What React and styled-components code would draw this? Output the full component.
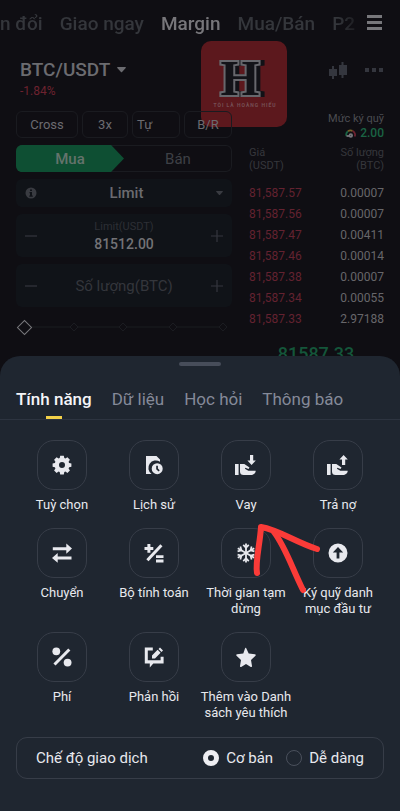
import React, { useState } from 'react'
import styled, { createGlobalStyle } from 'styled-components'

const GlobalStyle = createGlobalStyle`
  * {
    box-sizing: border-box;
  }

  body {
    margin: 0;
    min-height: 100vh;
    background-color: #0f0e13;
    color: #6b6b70;
    font-family: Roboto, "Noto Sans", sans-serif;
    font-size: 13px;
  }

  button, input, select {
    margin: 0;
    padding: 0;
    border: none;
    background: none;
    color: inherit;
    font-family: inherit;
    font-size: inherit;
  }

  button {
    cursor: pointer;
  }
`

const Page = styled.div`
  position: relative;
  min-height: 100vh;
  overflow: hidden;
`

const TopBar = styled.header`
  display: flex;
  align-items: center;
  justify-content: space-between;
  height: 48px;
  padding-right: 18px;
`

const TopNav = styled.nav`
  display: flex;
  gap: 17px;
  flex: 1;
  overflow: hidden;
  white-space: nowrap;
  mask-image: linear-gradient(to right, #000 92%, transparent);
`

const TopLink = styled.a`
  font-size: 19px;
  font-weight: 500;
  line-height: 28px;
  text-decoration: none;
  color: ${props => props.$active ? '#77767a' : '#34363b'};
`

const IconButton = styled.button`
  display: flex;
  align-items: center;
  justify-content: center;
  color: ${props => props.$light ? '#77777b' : '#34363e'};
`

const Badge = styled.div`
  position: absolute;
  top: 41px;
  left: 201px;
  width: 86px;
  height: 86px;
  border-radius: 10px;
  background-color: #5c181d;
`

const Monogram = styled.text`
  font-family: "Liberation Serif", serif;
  font-size: 50px;
  font-weight: 700;
  fill: #131318;
  stroke: #67676c;
  stroke-width: 4px;
  stroke-linejoin: miter;
  paint-order: stroke;
  filter: drop-shadow(4px 0 0 #111116);
`

const PairBar = styled.section`
  position: relative;
  display: flex;
  align-items: flex-start;
  justify-content: space-between;
  height: 63px;
  padding: 10px 17px 0 20px;
`

const Pair = styled.button`
  display: flex;
  align-items: center;
  gap: 7px;
  font-size: 19px;
  font-weight: 500;
  line-height: 24px;
`

const Change = styled.div`
  font-size: 12px;
  line-height: 18px;
  color: #6d222f;
`

const PairActions = styled.div`
  display: flex;
  align-items: center;
  gap: 18px;
  height: 24px;
`

const Trade = styled.main`
  position: relative;
  display: grid;
  grid-template-columns: 27fr 17fr;
  gap: 16px;
  padding: 0 16px;
`

const OrderForm = styled.form`
  display: flex;
  flex-direction: column;
  gap: 7px;
`

const Chips = styled.div`
  display: grid;
  grid-template-columns: 62fr 46fr 48fr 48fr;
  gap: 4px;
`

const Chip = styled.button`
  height: 27px;
  padding: 0 4px;
  border: 1px solid #1a1b20;
  border-radius: 6px;
  text-align: ${props => props.$left ? 'left' : 'center'};
`

const Sides = styled.div`
  display: grid;
  grid-template-columns: 1fr 1fr;
  height: 27px;
  border-radius: 6px;
  box-shadow: inset 0 0 0 1px #1a1b20;
`

const Side = styled.button`
  font-size: 15px;
  font-weight: ${props => props.$active ? 500 : 400};
  color: ${props => props.$active ? '#64736c' : '#3e4046'};
  background-color: ${props => props.$active ? '#0e4f33' : 'transparent'};
  border-radius: 6px 0 0 6px;
  clip-path: ${props => props.$active ? 'polygon(0 0, 88% 0, 100% 50%, 88% 100%, 0 100%)' : 'none'};
`

const Field = styled.div`
  display: flex;
  align-items: center;
  justify-content: space-between;
  height: ${props => props.$slim ? '28px' : '43px'};
  padding: 0 9px;
  border-radius: 6px;
  background-color: #101318;
  color: #393b41;
`

const TypeSelect = styled.select`
  flex: 1;
  min-width: 0;
  appearance: none;
  text-align: center;
  text-align-last: center;
  font-size: 15px;
  font-weight: 500;
  color: #6b6b70;
`

const FieldBody = styled.div`
  display: flex;
  flex-direction: column;
  flex: 1;
  min-width: 0;
  text-align: center;
`

const FieldLabel = styled.label`
  font-size: 11px;
  line-height: 16px;
  color: #2d2f35;
`

const FieldInput = styled.input`
  width: 100%;
  text-align: center;
  font-size: ${props => props.$large ? '15px' : '14px'};
  font-weight: ${props => props.$large ? 400 : 500};
  line-height: 18px;
  color: #737276;

  &::placeholder {
    color: #34363c;
    opacity: 1;
  }
`

const SliderBox = styled.div`
  position: relative;
  display: flex;
  align-items: center;
  height: 26px;
`

const Steps = styled.svg`
  width: 100%;
  height: 16px;
`

const Range = styled.input`
  position: absolute;
  left: 0;
  width: 100%;
  height: 16px;
  appearance: none;

  &::-webkit-slider-thumb {
    appearance: none;
    width: 11px;
    height: 11px;
    margin-left: 3px;
    border: 1px solid #77777b;
    background-color: #0f0e13;
    transform: rotate(45deg);
  }
`

const Book = styled.section`
  display: flex;
  flex-direction: column;
`

const MarginLevel = styled.div`
  display: flex;
  flex-direction: column;
  align-items: flex-end;
  font-size: 11px;
  line-height: 15px;
  color: #4b4c51;
`

const Level = styled.div`
  display: flex;
  align-items: center;
  gap: 4px;
  font-size: 12px;
  font-weight: 500;
  color: #1a6343;
`

const BookTable = styled.table`
  width: 100%;
  margin-top: 5px;
  border-collapse: collapse;
  font-size: 12px;

  th {
    height: 36px;
    padding: 0 0 10px;
    font-size: 11px;
    font-weight: 400;
    line-height: 13px;
    text-align: left;
    color: #36373c;
  }

  td {
    height: 21px;
    padding: 0;
    color: #67666a;
  }

  td:first-child {
    color: #632230;
  }

  th:last-child, td:last-child {
    text-align: right;
  }

  th:first-child, td:first-child {
    padding-left: 1px;
  }
`

const LastPrice = styled.div`
  margin-top: 13px;
  text-align: center;
  font-size: 18px;
  font-weight: 500;
  line-height: 24px;
  color: #14563a;
`

const Sheet = styled.section`
  position: fixed;
  right: 0;
  bottom: 0;
  left: 0;
  padding-bottom: 32px;
  border-radius: 20px 20px 0 0;
  background-color: #1f2630;
  color: #e8e9ee;
`

const GripArea = styled.div`
  padding: 6px 0 21px;
`

const Grip = styled.div`
  width: 42px;
  height: 4px;
  margin: 0 auto;
  border-radius: 2px;
  background-color: #474d5a;
`

const SheetTabs = styled.div`
  display: flex;
  gap: 20px;
  padding: 0 16px;
  border-bottom: 1px solid #2d3440;
`

const SheetTab = styled.button`
  display: flex;
  flex-direction: column;
  align-items: center;
  font-size: 17px;
  font-weight: ${props => props.$active ? 500 : 400};
  line-height: 24px;
  white-space: nowrap;
  color: ${props => props.$active ? '#f5f5f8' : '#858a99'};

  &::after {
    content: '';
    width: 16px;
    height: 3px;
    margin-top: 5px;
    background-color: ${props => props.$active ? '#f3d149' : 'transparent'};
  }
`

const Features = styled.div`
  display: grid;
  grid-template-columns: repeat(4, 1fr);
  row-gap: 15px;
  padding: 20px 16px 16px;
`

const FeatureCell = styled.div`
  position: relative;
`

const FeatureButton = styled.button`
  display: flex;
  flex-direction: column;
  align-items: center;
  gap: 7px;
  width: 100%;
  font-size: 13px;
  line-height: 16px;
`

const Tile = styled.span`
  display: flex;
  align-items: center;
  justify-content: center;
  width: 50px;
  height: 50px;
  border: 1px solid #373d48;
  border-radius: 17px;
`

/* hand-drawn arrow pointing at the cell it is placed in */
const Pointer = styled.svg`
  position: absolute;
  top: 80px;
  left: 52px;
  z-index: 1;
  pointer-events: none;
`

const Mode = styled.fieldset`
  display: flex;
  align-items: center;
  justify-content: space-between;
  height: 42px;
  margin: 0 16px;
  padding: 0 19px;
  border: 1px solid #373d48;
  border-radius: 11px;
  font-size: 15px;
`

const ModeOptions = styled.div`
  display: flex;
  gap: 13px;
`

const ModeLabel = styled.label`
  display: flex;
  align-items: center;
  gap: 7px;
`

const Radio = styled.input`
  appearance: none;
  width: 16px;
  height: 16px;
  border: 1px solid #4a505c;
  border-radius: 50%;

  &:checked {
    border: 5px solid #eeeef2;
  }
`

const Caret = ({ size = 9 }) => (
  <svg width={size} height={size * 0.6} viewBox="0 0 10 6" fill="currentColor">
    <path d="M0.8 0h8.4c.6 0 .9.7.5 1.1L5.6 5.6a.8.8 0 0 1-1.2 0L.3 1.1C-.1.7.2 0 .8 0z" />
  </svg>
)

const Plus = () => (
  <svg width="12" height="12" viewBox="0 0 12 12" stroke="currentColor" strokeWidth="1.2">
    <path d="M6 0v12M0 6h12" />
  </svg>
)

const Minus = () => (
  <svg width="12" height="12" viewBox="0 0 12 12" stroke="currentColor" strokeWidth="1.2">
    <path d="M0 6h12" />
  </svg>
)

const Logo = () => (
  <svg width="86" height="86" viewBox="0 0 86 86" textAnchor="middle">
    <Monogram x="39" y="54">H</Monogram>
    <text x="44" y="66" fill="#765055" fontSize="5" fontWeight="700" letterSpacing="1">TÔI LÀ HOÀNG HIẾU</text>
  </svg>
)

const icons = {
  gear: <path fillRule="evenodd" d="M8.2.8h3.6l.5 2.3 1.1.5 2-1.3 2.5 2.5-1.3 2 .5 1.1 2.3.5v3.4l-2.3.5-.5 1.1 1.3 2-2.5 2.5-2-1.3-1.1.5-.5 2.3H8.2l-.5-2.3-1.1-.5-2 1.3-2.5-2.5 1.3-2-.5-1.1-2.3-.5V8.4l2.3-.5.5-1.1-1.3-2 2.5-2.5 2 1.3 1.1-.5zM10 7a3 3 0 1 0 0 6 3 3 0 0 0 0-6z" />,
  history: <>
    <path d="M2 1h10.5L16 4.6v2.1A6.6 6.6 0 0 0 7.6 19H2z" />
    <path fillRule="evenodd" d="M13.2 8.2a5.5 5.5 0 1 1 0 11 5.5 5.5 0 0 1 0-11zm-1 2.5v3.6l2.4 2.2 1.1-1.2-1.8-1.7v-2.9z" />
  </>,
  borrow: <>
    <path d="M-1 9h3.6v11H-1zM4 9h4.3l5.2 3.4-1 1.7-3.1-1.4-.5 1 3.4 2h7.4c0 2.5-2.2 4.3-4.9 4.3H7.600Q4 20 4 16.500z" />
    <path d="M14 0h3.2v5.6h2.6l-4.2 4.3-4.2-4.3H14z" />
  </>,
  repay: <>
    <path d="M-1 9h3.6v11H-1zM4 9h4.3l5.2 3.4-1 1.7-3.1-1.4-.5 1 3.4 2h7.4c0 2.5-2.2 4.3-4.9 4.3H7.600Q4 20 4 16.500z" />
    <path d="M14 10h3.2V4.4h2.6L15.6 0l-4.2 4.4H14z" />
  </>,
  transfer: <path d="M.8 4.200h13.500V0.500L20 5.600l-5.700 5.200V7.200H.8zM19.500 16.500H5.700v3.300L0 15l5.700-5v3.500h13.800z" />,
  calc: <>
    <path d="M3.400 1h3v2.900h2.900v3H6.400v2.900h-3V6.900H.5v-3h2.900zM12 12.200h7.500v2.800H12zM12 16.600h7.500v2.800H12z" />
    <path d="M17.400 2.300 3.400 17.300" stroke="currentColor" strokeWidth="3" />
  </>,
  freeze: <g fill="none" stroke="currentColor">
    {[0, 60, 120, 180, 240, 300].map(angle => (
      <g key={angle} transform={`rotate(${angle} 10 10)`}>
        <path d="M10 10V.5" strokeWidth="1.8" />
        <path d="M7.2 1.900 10 4.700l2.800-2.800" strokeWidth="1.700" />
      </g>
    ))}
  </g>,
  portfolio: <path fillRule="evenodd" d="M10 .5a9.500 9.500 0 1 1 0 19 9.500 9.500 0 0 1 0-19zM10 4 4.800 9.400h3.800v6.200h2.800V9.400h3.800z" />,
  fee: <>
    <circle cx="4.3" cy="4.3" r="3.9" />
    <circle cx="15.6" cy="15.6" r="3.9" />
    <path d="M17.3 2.5 2.5 17.5" stroke="currentColor" strokeWidth="3" />
  </>,
  feedback: <>
    <path d="M.8.6h8v3H3.8v9.6h12.8V9.8h3v6.6H9.3L5.8 20.5v-4.1h-5z" />
    <path d="M8 11.5V8.4l5.6-5.600 3 3L11 11.500zM14.500 1.900 16 .4l3 3-1.500 1.500z" />
  </>,
  star: <path d="m10 .8 2.700 5.700 6.300.8c.7.100 1 .9.500 1.400l-4.500 4.400 1 6c.1.700-.6 1.200-1.200.9L10 17l-4.800 3c-.6.300-1.300-.2-1.200-.9l1-6L.5 8.700C0 8.200.3 7.400 1 7.300l6.300-.8L9 1.400c.2-.7.700-.9 1-.6z" />,
}

const features = [
  { icon: 'gear', label: 'Tuỳ chọn' },
  { icon: 'history', label: 'Lịch sử' },
  { icon: 'borrow', label: 'Vay', pointed: true },
  { icon: 'repay', label: 'Trả nợ' },
  { icon: 'transfer', label: 'Chuyển' },
  { icon: 'calc', label: 'Bộ tính toán' },
  { icon: 'freeze', label: 'Thời gian tạm dừng' },
  { icon: 'portfolio', label: 'Ký quỹ danh mục đầu tư' },
  { icon: 'fee', label: 'Phí' },
  { icon: 'feedback', label: 'Phản hồi' },
  { icon: 'star', label: 'Thêm vào Danh sách yêu thích' },
]

const orders = [
  ['81,587.57', '0.00007'],
  ['81,587.56', '0.00007'],
  ['81,587.47', '0.00411'],
  ['81,587.46', '0.00014'],
  ['81,587.38', '0.00007'],
  ['81,587.34', '0.00055'],
  ['81,587.33', '2.97188'],
]

const topLinks = ['n đổi', 'Giao ngay', 'Margin', 'Mua/Bán', 'P2']
const sheetTabs = ['Tính năng', 'Dữ liệu', 'Học hỏi', 'Thông báo']

const Header = () => (
  <>
    <TopBar>
      <TopNav>
        {topLinks.map(link => (
          <TopLink key={link} href="#" $active={link === 'Margin'}>{link}</TopLink>
        ))}
      </TopNav>
      <IconButton $light aria-label="Menu">
        <svg width="15" height="18" viewBox="0 0 15 18" fill="currentColor">
          <path d="M0 0h15v3H0zM0 6h15v3H0zM0 12h15v3H0z" />
        </svg>
      </IconButton>
    </TopBar>
    <Badge><Logo /></Badge>
    <PairBar>
      <div>
        <Pair>BTC/USDT <Caret /></Pair>
        <Change>-1.84%</Change>
      </div>
      <PairActions>
        <IconButton aria-label="Chart">
          <svg width="18" height="17" viewBox="0 0 18 17" fill="currentColor">
            <path d="M3 4h2v3h3v7H5v3H3v-3H0V7h3zM12.500 0h2v3H18v10h-3.500v3h-2v-3H10V3h2.500z" />
          </svg>
        </IconButton>
        <IconButton aria-label="More">
          <svg width="18" height="4" viewBox="0 0 18 4" fill="currentColor">
            <path d="M0 0h4v4H0zM7 0h4v4H7zM14 0h4v4h-4z" />
          </svg>
        </IconButton>
      </PairActions>
    </PairBar>
  </>
)

const Form = () => {
  const [percent, setPercent] = useState(0)

  return (
    <OrderForm onSubmit={e => e.preventDefault()}>
      <Chips>
        <Chip type="button">Cross</Chip>
        <Chip type="button">3x</Chip>
        <Chip type="button" $left>Tự</Chip>
        <Chip type="button">B/R</Chip>
      </Chips>
      <Sides>
        <Side type="button" $active>Mua</Side>
        <Side type="button">Bán</Side>
      </Sides>
      <Field $slim>
        <svg width="12" height="12" viewBox="0 0 12 12">
          <circle cx="6" cy="6" r="5.5" fill="#393b41" />
          <path d="M5 2.5h2v1.600H5zM4.500 5H7v3.500h.8v1.200H4.300V8.500H5V6.200h-.5z" fill="#101318" />
        </svg>
        <TypeSelect aria-label="Order type">
          <option>Limit</option>
        </TypeSelect>
        <Caret size={7} />
      </Field>
      <Field>
        <IconButton type="button" aria-label="Decrease price"><Minus /></IconButton>
        <FieldBody>
          <FieldLabel htmlFor="price">Limit(USDT)</FieldLabel>
          <FieldInput id="price" defaultValue="81512.00" />
        </FieldBody>
        <IconButton type="button" aria-label="Increase price"><Plus /></IconButton>
      </Field>
      <Field>
        <IconButton type="button" aria-label="Decrease amount"><Minus /></IconButton>
        <FieldBody>
          <FieldInput $large aria-label="Số lượng(BTC)" placeholder="Số lượng(BTC)" />
        </FieldBody>
        <IconButton type="button" aria-label="Increase amount"><Plus /></IconButton>
      </Field>
      <SliderBox>
        <Steps viewBox="0 0 216 16" fill="#0f0e13" stroke="#1b1c21">
          <path d="M14 8h194" />
          {[58, 107, 157, 207].map(x => (
            <path key={x} d={`M${x - 4} 8l4-4 4 4-4 4z`} />
          ))}
        </Steps>
        <Range type="range" aria-label="Percent" value={percent} onChange={e => setPercent(e.target.value)} />
      </SliderBox>
    </OrderForm>
  )
}

const OrderBook = () => (
  <Book>
    <MarginLevel>
      Mức ký quỹ
      <Level>
        <svg width="11" height="10" viewBox="0 0 11 10" fill="none" strokeWidth="1.8">
          <path d="M1.5 7A4.200 4.200 0 0 1 3 2.200" stroke="#1a6343" />
          <path d="M3 2.200a4.200 4.200 0 0 1 4.500-.3" stroke="#76612a" />
          <path d="M7.500 1.900A4.200 4.200 0 0 1 9.700 7.500" stroke="#6d222f" />
          <path d="M1.500 7h3" stroke="#77777b" />
          <circle cx="5.8" cy="6.5" r="1.3" stroke="#77777b" />
        </svg>
        2.00
      </Level>
    </MarginLevel>
    <BookTable>
      <thead>
        <tr>
          <th>Giá<br />(USDT)</th>
          <th>Số lượng<br />(BTC)</th>
        </tr>
      </thead>
      <tbody>
        {orders.map(([price, amount]) => (
          <tr key={price}>
            <td>{price}</td>
            <td>{amount}</td>
          </tr>
        ))}
      </tbody>
    </BookTable>
    <LastPrice>81587.33</LastPrice>
  </Book>
)

const Feature = ({ icon, label, pointed }) => (
  <FeatureCell>
    <FeatureButton>
      <Tile>
        <svg width="20" height="20" viewBox="0 0 20 20" fill="currentColor" overflow="visible">
          {icons[icon]}
        </svg>
      </Tile>
      {label}
    </FeatureButton>
    {pointed && (
      <Pointer width="72" height="80" viewBox="0 0 72 80" fill="none" stroke="#fb3b38" strokeWidth="6" strokeLinecap="round" strokeLinejoin="round">
        <path d="M5 53C3 42 8 24 9 7c18 3 34 15 56 22" />
        <path d="M22 12c12 16 18 36 29 58" />
      </Pointer>
    )}
  </FeatureCell>
)

const FeatureSheet = () => {
  const [tab, setTab] = useState('Tính năng')
  const [mode, setMode] = useState('basic')

  return (
    <Sheet>
      <GripArea>
        <Grip />
      </GripArea>
      <SheetTabs>
        {sheetTabs.map(name => (
          <SheetTab key={name} $active={name === tab} onClick={() => setTab(name)}>{name}</SheetTab>
        ))}
      </SheetTabs>
      <Features>
        {features.map(feature => <Feature key={feature.label} {...feature} />)}
      </Features>
      <Mode aria-label="Chế độ giao dịch">
        <span>Chế độ giao dịch</span>
        <ModeOptions>
          <ModeLabel>
            <Radio type="radio" name="mode" checked={mode === 'basic'} onChange={() => setMode('basic')} />
            Cơ bản
          </ModeLabel>
          <ModeLabel>
            <Radio type="radio" name="mode" checked={mode === 'easy'} onChange={() => setMode('easy')} />
            Dễ dàng
          </ModeLabel>
        </ModeOptions>
      </Mode>
    </Sheet>
  )
}

const App = () => {
  return (
    <Page>
      <GlobalStyle />
      <Header />
      <Trade>
        <Form />
        <OrderBook />
      </Trade>
      <FeatureSheet />
    </Page>
  )
}

export default App
